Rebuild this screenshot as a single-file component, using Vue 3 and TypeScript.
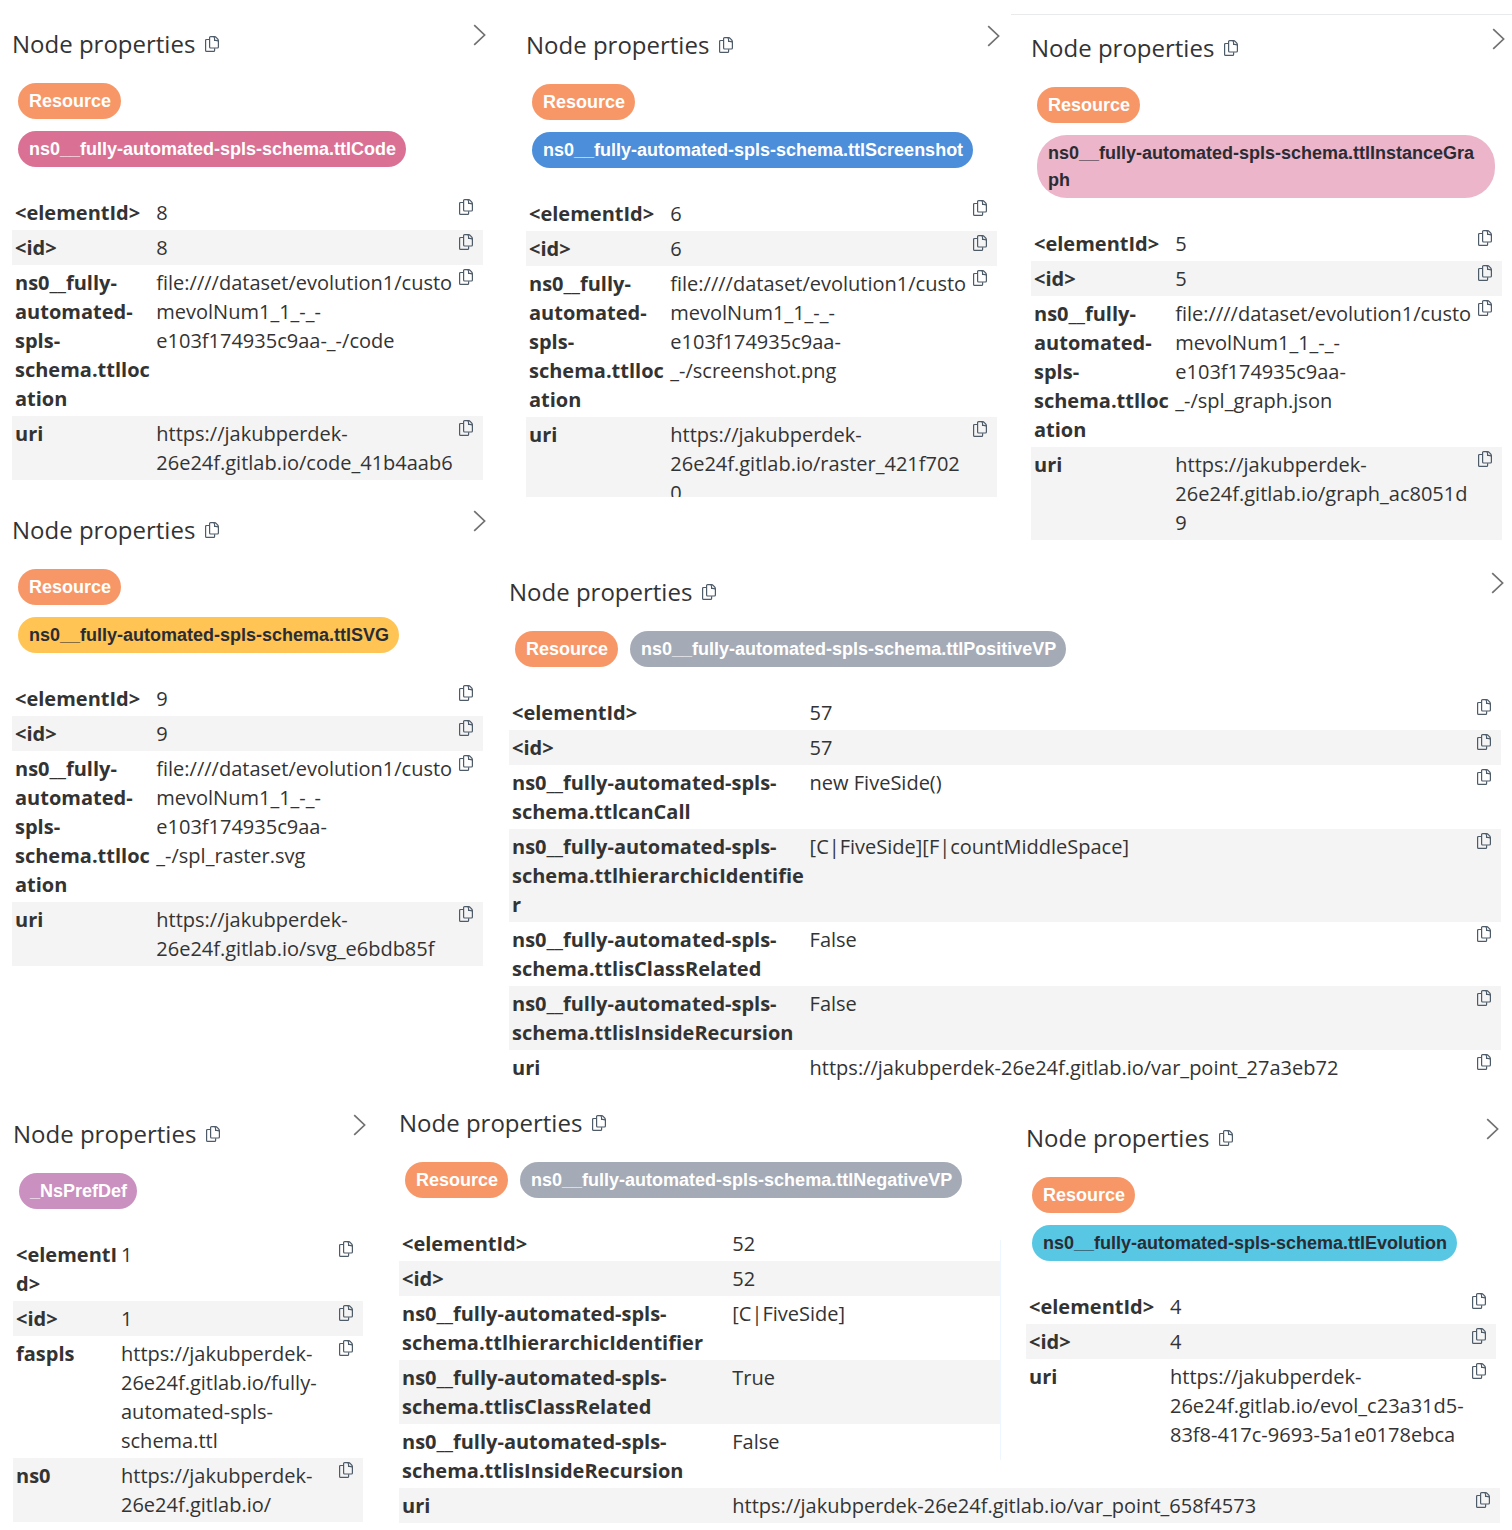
<script setup lang="ts">
import { defineComponent, h } from 'vue'

interface Label {
  text: string
  color: string
  dark?: boolean
}

interface NodePanel {
  id: string
  labels: Label[]
  rows: [string, string][]
}

const resource: Label = { text: 'Resource', color: '#f79767' }
const prefix = 'ns0__fully-automated-spls-schema.ttl'
const host = 'https://jakubperdek-26e24f.gitlab.io/'
const dataset = 'file:////dataset/evolution1/customevolNum1_1_-_-e103f174935c9aa-_-/'

const panels: Record<string, NodePanel> = {
  code: {
    id: 'code',
    labels: [resource, { text: prefix + 'Code', color: '#da7194' }],
    rows: [
      ['<elementId>', '8'],
      ['<id>', '8'],
      [prefix + 'location', dataset + 'code'],
      ['uri', host + 'code_41b4aab6'],
    ],
  },
  screenshot: {
    id: 'screenshot',
    labels: [resource, { text: prefix + 'Screenshot', color: '#4c8eda' }],
    rows: [
      ['<elementId>', '6'],
      ['<id>', '6'],
      [prefix + 'location', dataset + 'screenshot.png'],
      ['uri', host + 'raster_421f7020'],
    ],
  },
  graph: {
    id: 'graph',
    labels: [resource, { text: prefix + 'InstanceGraph', color: '#ecb5c9', dark: true }],
    rows: [
      ['<elementId>', '5'],
      ['<id>', '5'],
      [prefix + 'location', dataset + 'spl_graph.json'],
      ['uri', host + 'graph_ac8051d9'],
    ],
  },
  svg: {
    id: 'svg',
    labels: [resource, { text: prefix + 'SVG', color: '#ffc454', dark: true }],
    rows: [
      ['<elementId>', '9'],
      ['<id>', '9'],
      [prefix + 'location', dataset + 'spl_raster.svg'],
      ['uri', host + 'svg_e6bdb85f'],
    ],
  },
  positive: {
    id: 'positive',
    labels: [resource, { text: prefix + 'PositiveVP', color: '#a5abb6' }],
    rows: [
      ['<elementId>', '57'],
      ['<id>', '57'],
      [prefix + 'canCall', 'new FiveSide()'],
      [prefix + 'hierarchicIdentifier', '[C|FiveSide][F|countMiddleSpace]'],
      [prefix + 'isClassRelated', 'False'],
      [prefix + 'isInsideRecursion', 'False'],
      ['uri', host + 'var_point_27a3eb72'],
    ],
  },
  nspref: {
    id: 'nspref',
    labels: [{ text: '_NsPrefDef', color: '#c990c0' }],
    rows: [
      ['<elementId>', '1'],
      ['<id>', '1'],
      ['faspls', host + 'fully-automated-spls-schema.ttl'],
      ['ns0', host],
    ],
  },
  negative: {
    id: 'negative',
    labels: [resource, { text: prefix + 'NegativeVP', color: '#a5abb6' }],
    rows: [
      ['<elementId>', '52'],
      ['<id>', '52'],
      [prefix + 'hierarchicIdentifier', '[C|FiveSide]'],
      [prefix + 'isClassRelated', 'True'],
      [prefix + 'isInsideRecursion', 'False'],
      ['uri', host + 'var_point_658f4573'],
    ],
  },
  evolution: {
    id: 'evolution',
    labels: [resource, { text: prefix + 'Evolution', color: '#57c7e3', dark: true }],
    rows: [
      ['<elementId>', '4'],
      ['<id>', '4'],
      ['uri', host + 'evol_c23a31d5-83f8-417c-9693-5a1e0178ebca'],
    ],
  },
}

const CopyButton = defineComponent({
  props: { label: { type: String, required: true } },
  setup(props) {
    return () =>
      h('button', { type: 'button', class: 'copy', 'aria-label': props.label }, [
        h('svg', { viewBox: '0 0 14 16', width: 14, height: 16 }, [
          h('path', { d: 'M4.6 1.6Q4.6 .6 5.6 .6H9.2Q10.6 .6 11.6 1.8L12.8 3.2Q13.4 4 13.4 5V11Q13.4 12 12.4 12H5.6Q4.6 12 4.6 11Z' }),
          h('path', { d: 'M8.8 .7Q9.8 1.4 9.6 4.4Q12.4 4.2 13.3 5.2' }),
          h('path', { d: 'M4.4 3.5H1.6Q.6 3.5 .6 4.5V14.4Q.6 15.4 1.6 15.4H8.6Q9.6 15.4 9.6 14.4V12.2' }),
        ]),
      ])
  },
})

const PropertiesPanel = defineComponent({
  props: { panel: { type: Object as () => NodePanel, required: true } },
  setup(props) {
    return () => {
      const { id, labels, rows } = props.panel
      return h('section', { class: 'panel', 'aria-labelledby': id + '-title' }, [
        h('header', { class: 'head' }, [
          h('div', { class: 'heading' }, [
            h('h2', { id: id + '-title' }, 'Node properties'),
            h(CopyButton, { label: 'Copy all properties' }),
          ]),
          h('button', { type: 'button', class: 'collapse', 'aria-label': 'Collapse panel' }, [
            h('svg', { viewBox: '0 0 13 22', width: 13, height: 22 }, [h('path', { d: 'M1.2 1.2L11.6 11L1.2 20.8' })]),
          ]),
        ]),
        h(
          'div',
          { class: 'labels' },
          labels.map((l) => h('span', { class: ['label', { dark: l.dark }], style: { background: l.color } }, l.text)),
        ),
        h('div', { class: 'table-wrap' }, [
          h('table', { 'aria-labelledby': id + '-title' }, [
            h('colgroup', [h('col', { class: 'c-key' }), h('col'), h('col', { class: 'c-copy' })]),
            h(
              'tbody',
              rows.map(([key, value]) =>
                h('tr', [
                  h('th', { scope: 'row' }, key),
                  h('td', value),
                  h('td', { class: 'action' }, [h(CopyButton, { label: 'Copy ' + key })]),
                ]),
              ),
            ),
          ]),
        ]),
      ])
    }
  },
})
</script>

<template>
  <main class="board">
    <div class="upper">
      <div class="left">
        <PropertiesPanel :panel="panels.code" />
        <PropertiesPanel :panel="panels.svg" />
      </div>
      <div class="right">
        <div class="pair">
          <div class="slot clipped"><PropertiesPanel :panel="panels.screenshot" /></div>
          <div class="slot ruled"><PropertiesPanel :panel="panels.graph" /></div>
        </div>
        <div class="slot wide"><PropertiesPanel :panel="panels.positive" /></div>
      </div>
    </div>
    <div class="lower">
      <div class="slot nspref"><PropertiesPanel :panel="panels.nspref" /></div>
      <div class="slot negative"><PropertiesPanel :panel="panels.negative" /></div>
      <div class="slot evolution"><PropertiesPanel :panel="panels.evolution" /></div>
    </div>
  </main>
</template>

<style>
body {
  margin: 0;
  background: #fff;
}
</style>

<style scoped>
.board {
  font-family: 'Open Sans', 'Noto Sans', sans-serif;
  font-size: 20px;
  line-height: 29px;
  color: #333;
}
.upper {
  display: grid;
  grid-template-columns: 500fr 1012fr;
}
.left {
  display: flex;
  flex-direction: column;
  gap: 26px;
  padding: 20px 14px 0 12px;
}
.right {
  min-width: 0;
}
.pair {
  display: grid;
  grid-template-columns: 511fr 501fr;
}
.slot {
  min-width: 0;
}
.clipped {
  padding: 21px 11px 0 26px;
}
.clipped :deep(.table-wrap) {
  max-height: 301px;
}
.ruled {
  margin-top: 14px;
  border-top: 1px solid #e9eaec;
  padding: 9px 7px 0 20px;
}
.wide {
  padding: 28px 8px 0 9px;
}
.lower {
  display: grid;
  grid-template-columns: 390fr 610fr 512fr;
  align-items: start;
  margin-top: 14px;
}
.nspref {
  grid-area: 1 / 1;
  padding: 11px 24px 0 13px;
}
.negative {
  grid-area: 1 / 2 / 2 / 4;
  padding: 0 9px;
}
.evolution {
  grid-area: 1 / 3;
  z-index: 1;
  padding: 15px 13px 8px 26px;
  background: linear-gradient(#eef7fd, #eef7fd) 0 100% / 1px 220px no-repeat, #fff;
}

:deep(.head) {
  display: flex;
  justify-content: space-between;
  align-items: flex-start;
}
:deep(.heading) {
  display: flex;
  align-items: center;
  gap: 10px;
  margin-top: 7px;
}
:deep(h2) {
  margin: 0;
  font-size: 24px;
  line-height: 34px;
  font-weight: 400;
}
:deep(button) {
  display: block;
  flex: none;
  margin: 0;
  padding: 0;
  border: 0;
  background: none;
  cursor: pointer;
}
:deep(svg) {
  display: block;
  fill: none;
}
:deep(.copy svg) {
  stroke: #4d5a68;
  stroke-width: 1.2;
}
:deep(.collapse) {
  margin-top: 4px;
}
:deep(.collapse svg) {
  stroke: #717171;
  stroke-width: 1.7;
}
:deep(.labels) {
  display: flex;
  flex-wrap: wrap;
  gap: 12px;
  margin: 22px 10px 28px 6px;
}
:deep(.label) {
  box-sizing: border-box;
  padding: 5px 10px 4px 11px;
  border-radius: 30px;
  font: bold 18px/27px 'Liberation Sans', Arial, sans-serif;
  color: #fff;
  word-break: break-all;
}
:deep(.label.dark) {
  color: #2a2c34;
}
:deep(.table-wrap) {
  margin-right: 3px;
  overflow: hidden;
}
:deep(table) {
  width: 100%;
  table-layout: fixed;
  border-collapse: collapse;
}
:deep(.c-key) {
  width: 30%;
}
:deep(.c-copy) {
  width: 28px;
}
:deep(tr:nth-child(even)) {
  background: #f4f4f4;
}
:deep(th),
:deep(td) {
  padding: 3px 0 3px 3px;
  vertical-align: top;
  text-align: left;
  overflow-wrap: anywhere;
}
:deep(th) {
  font-weight: 700;
}
:deep(td.action) {
  padding: 4px 0 0 4px;
}
</style>
